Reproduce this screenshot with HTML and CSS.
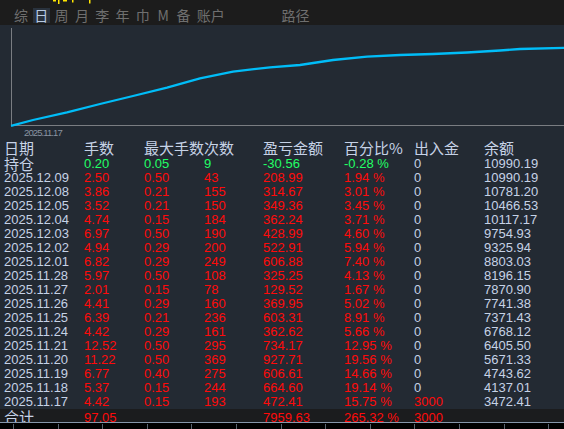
FILE: index.html
```html
<!DOCTYPE html>
<html lang="zh">
<head>
<meta charset="utf-8">
<title>账户统计</title>
<link rel="stylesheet" href="styles.css">
</head>
<body>
<div class="app">
  <div class="tabbar">
    <svg class="marks" width="60" height="4" viewBox="0 0 60 4">
      <rect x="0" y="0" width="3" height="1.5" fill="#ffe600"/>
      <rect x="5" y="0" width="1.5" height="4" fill="#ffe600"/>
      <rect x="10" y="0" width="4" height="1.5" fill="#ffe600"/>
      <rect x="19" y="0" width="1.5" height="2.5" fill="#ffe600"/>
      <rect x="36" y="0" width="1.5" height="3.5" fill="#ffe600"/>
    </svg>
    <span class="tab">综</span>
    <span class="tab active">日</span>
    <span class="tab">周</span>
    <span class="tab">月</span>
    <span class="tab">李</span>
    <span class="tab">年</span>
    <span class="tab">巾</span>
    <span class="tab">M</span>
    <span class="tab">备</span>
    <span class="tab wide">账户</span>
    <span class="tab wide path">路径</span>
  </div>

  <div class="chart">
    <svg width="564" height="118" viewBox="0 0 564 118">
      <line x1="11.5" y1="3" x2="11.5" y2="101" stroke="#7a7d82" stroke-width="1"/>
      <line x1="11" y1="100.5" x2="564" y2="100.5" stroke="#7a7d82" stroke-width="1"/>
      <polyline fill="none" stroke="#00bdf8" stroke-width="2.3"
        points="11,100.8 33,95 67,87.3 100,79 133,71 167,62.7 200,53.3 233,46.7 270,42.3 300,40 333,35 367,31.7 400,30 433,29 467,27.5 500,25.5 520,24 564,22.8"/>
      <text class="axis-label" x="24" y="111">2025.11.17</text>
    </svg>
  </div>

  <div class="table">
    <div class="c cjk hd head">日期</div><div class="c cjk hd head">手数</div><div class="c cjk hd head span2">最大手数次数</div><div class="c cjk hd head">盈亏金额</div><div class="c cjk hd head">百分比%</div><div class="c cjk hd head">出入金</div><div class="c cjk hd head">余额</div>

    <div class="c cjk hd pos">持仓</div><div class="c g">0.20</div><div class="c g">0.05</div><div class="c g">9</div><div class="c g">-30.56</div><div class="c g">-0.28 %</div><div class="c l">0</div><div class="c l">10990.19</div>

    <div class="c l">2025.12.09</div><div class="c r">2.50</div><div class="c r">0.50</div><div class="c r">43</div><div class="c r">208.99</div><div class="c r">1.94 %</div><div class="c l">0</div><div class="c l">10990.19</div>
    <div class="c l">2025.12.08</div><div class="c r">3.86</div><div class="c r">0.21</div><div class="c r">155</div><div class="c r">314.67</div><div class="c r">3.01 %</div><div class="c l">0</div><div class="c l">10781.20</div>
    <div class="c l">2025.12.05</div><div class="c r">3.52</div><div class="c r">0.21</div><div class="c r">150</div><div class="c r">349.36</div><div class="c r">3.45 %</div><div class="c l">0</div><div class="c l">10466.53</div>
    <div class="c l">2025.12.04</div><div class="c r">4.74</div><div class="c r">0.15</div><div class="c r">184</div><div class="c r">362.24</div><div class="c r">3.71 %</div><div class="c l">0</div><div class="c l">10117.17</div>
    <div class="c l">2025.12.03</div><div class="c r">6.97</div><div class="c r">0.50</div><div class="c r">190</div><div class="c r">428.99</div><div class="c r">4.60 %</div><div class="c l">0</div><div class="c l">9754.93</div>
    <div class="c l">2025.12.02</div><div class="c r">4.94</div><div class="c r">0.29</div><div class="c r">200</div><div class="c r">522.91</div><div class="c r">5.94 %</div><div class="c l">0</div><div class="c l">9325.94</div>
    <div class="c l">2025.12.01</div><div class="c r">6.82</div><div class="c r">0.29</div><div class="c r">249</div><div class="c r">606.88</div><div class="c r">7.40 %</div><div class="c l">0</div><div class="c l">8803.03</div>
    <div class="c l">2025.11.28</div><div class="c r">5.97</div><div class="c r">0.50</div><div class="c r">108</div><div class="c r">325.25</div><div class="c r">4.13 %</div><div class="c l">0</div><div class="c l">8196.15</div>
    <div class="c l">2025.11.27</div><div class="c r">2.01</div><div class="c r">0.15</div><div class="c r">78</div><div class="c r">129.52</div><div class="c r">1.67 %</div><div class="c l">0</div><div class="c l">7870.90</div>
    <div class="c l">2025.11.26</div><div class="c r">4.41</div><div class="c r">0.29</div><div class="c r">160</div><div class="c r">369.95</div><div class="c r">5.02 %</div><div class="c l">0</div><div class="c l">7741.38</div>
    <div class="c l">2025.11.25</div><div class="c r">6.39</div><div class="c r">0.21</div><div class="c r">236</div><div class="c r">603.31</div><div class="c r">8.91 %</div><div class="c l">0</div><div class="c l">7371.43</div>
    <div class="c l">2025.11.24</div><div class="c r">4.42</div><div class="c r">0.29</div><div class="c r">161</div><div class="c r">362.62</div><div class="c r">5.66 %</div><div class="c l">0</div><div class="c l">6768.12</div>
    <div class="c l">2025.11.21</div><div class="c r">12.52</div><div class="c r">0.50</div><div class="c r">295</div><div class="c r">734.17</div><div class="c r">12.95 %</div><div class="c l">0</div><div class="c l">6405.50</div>
    <div class="c l">2025.11.20</div><div class="c r">11.22</div><div class="c r">0.50</div><div class="c r">369</div><div class="c r">927.71</div><div class="c r">19.56 %</div><div class="c l">0</div><div class="c l">5671.33</div>
    <div class="c l">2025.11.19</div><div class="c r">6.77</div><div class="c r">0.40</div><div class="c r">275</div><div class="c r">606.61</div><div class="c r">14.66 %</div><div class="c l">0</div><div class="c l">4743.62</div>
    <div class="c l">2025.11.18</div><div class="c r">5.37</div><div class="c r">0.15</div><div class="c r">244</div><div class="c r">664.60</div><div class="c r">19.14 %</div><div class="c l">0</div><div class="c l">4137.01</div>
    <div class="c l">2025.11.17</div><div class="c r">4.42</div><div class="c r">0.15</div><div class="c r">193</div><div class="c r">472.41</div><div class="c r">15.75 %</div><div class="c r">3000</div><div class="c l">3472.41</div>
  </div>

  <div class="total">
    <div class="c cjk hd">合计</div><div class="c r">97.05</div><div class="c"></div><div class="c"></div><div class="c r">7959.63</div><div class="c r">265.32 %</div><div class="c r">3000</div><div class="c"></div>
  </div>
  <div class="ticks"></div>
</div>
</body>
</html>
```

FILE: styles.css
```css
html, body {
  margin: 0;
  padding: 0;
  background: #232a33;
}
.app {
  width: 564px;
  height: 429px;
  overflow: hidden;
  background: #232a33;
  font-family: "Liberation Sans", "Noto Sans CJK SC", sans-serif;
  display: flex;
  flex-direction: column;
}
.tabbar {
  position: relative;
  height: 25px;
  flex: none;
  background: #1c1c1c;
  display: flex;
  align-items: flex-start;
  gap: 3.3px;
  padding-left: 12.5px;
  box-sizing: border-box;
  font-family: "Noto Sans CJK SC", sans-serif;
  font-size: 14px;
  color: #6f6f6f;
}
.marks {
  position: absolute;
  left: 53px;
  top: 0;
  display: block;
}
.tab {
  margin-top: 8px;
  width: 17px;
  height: 15px;
  line-height: 15px;
  text-align: center;
  flex: none;
}
.tab.wide {
  width: auto;
  padding: 0 1px 0 1.5px;
}
.tab.path {
  margin-left: 51px;
}
.tab.active {
  background: #29323d;
  color: #b9cbe3;
}
.chart {
  height: 118px;
  flex: none;
}
.chart svg {
  display: block;
}
.axis-label {
  font-family: "Liberation Sans", sans-serif;
  font-size: 9.5px;
  letter-spacing: -0.9px;
  fill: #8893a2;
}
.table, .total {
  display: grid;
  grid-template-columns: 80px 60px 60px 59px 81px 70px 70px 1fr;
  grid-auto-rows: 14px;
  padding-left: 4px;
  font-size: 13px;
  line-height: 14px;
  flex: none;
}
.c {
  white-space: nowrap;
  overflow: visible;
}
.span2 {
  grid-column: span 2;
}
.cjk {
  font-family: "Noto Sans CJK SC", sans-serif;
  font-size: 15px;
  line-height: 12px;
}
.cjk.head {
  line-height: 10px;
}
.cjk.pos {
  line-height: 13px;
}
.hd { color: #c6d2e6; }
.l { color: #c6d2e6; }
.r { color: #ff0a0a; }
.g { color: #22ff66; }
.total {
  background: #1b1c1e;
  height: 11px;
  grid-auto-rows: 14px;
  padding-top: 2px;
  overflow: hidden;
  box-sizing: content-box;
}
.ticks {
  flex: 1;
  background-color: #000;
  border-top: 1px solid #8696aa;
  background-image: repeating-linear-gradient(to right, #5a6470 0 1px, transparent 1px 44.6px);
  background-position: 13px 1px;
  background-repeat: repeat-x;
  background-size: 100% 6px;
}
```
